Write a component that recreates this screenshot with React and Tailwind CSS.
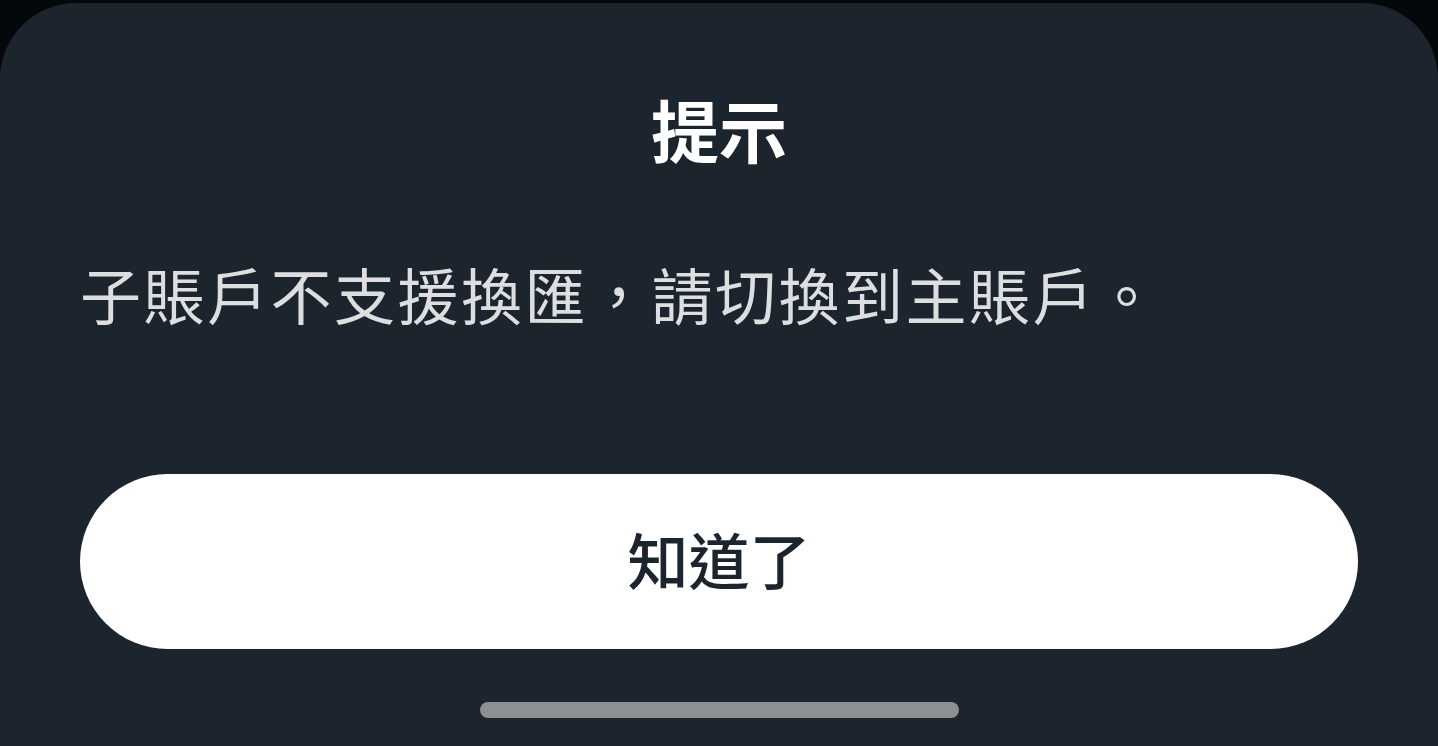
export default function App() {
  return (
    <div
      className="h-[746px] w-[1438px] overflow-hidden bg-[#05080b] pt-[3px]"
      style={{ fontFamily: '"Noto Sans CJK TC", "Noto Sans CJK SC", sans-serif' }}
    >
      <div className="flex h-full flex-col rounded-t-[76px] bg-[#1c252e] px-[80px]">
        <h1 className="mt-[92px] text-center text-[68px] font-bold leading-[68px] text-white">提示</h1>
        <p className="mt-[100px] text-[61px] leading-[61px] tracking-[2.5px] text-[#dcdee0]">
          子賬戶不支援換匯，請切換到主賬戶。
        </p>
        <button className="mt-[150px] h-[175px] w-full rounded-full bg-white pb-[6px] text-[61px] font-medium text-[#1c252e]">
          知道了
        </button>
        <div className="mt-[53px] flex justify-center">
          <div className="h-[16px] w-[479px] rounded-full bg-[#8c9093]" />
        </div>
      </div>
    </div>
  );
}
